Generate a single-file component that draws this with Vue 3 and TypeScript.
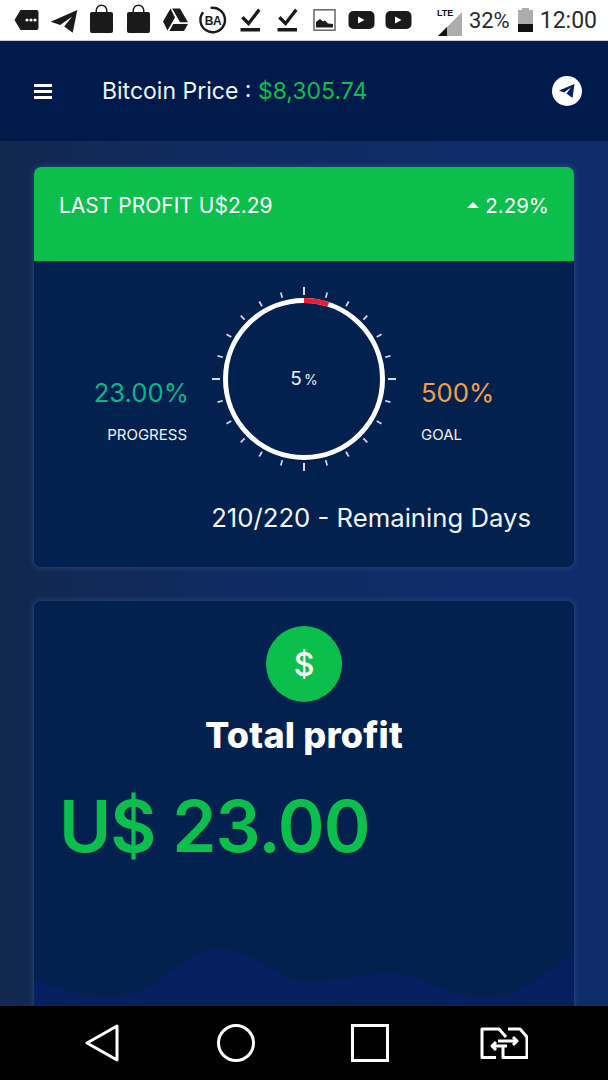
<template>
  <div class="screen">
    <div class="status">
      <svg v-for="(ic, i) in statusIcons" :key="i" class="slot" viewBox="0 0 37 40">
        <path :d="ic" fill="#1a1a1a" fill-rule="evenodd" />
        <circle v-if="i === 0" cx="19" cy="20" r="1.6" fill="#fff" />
        <circle v-if="i === 0" cx="23" cy="20" r="1.6" fill="#fff" />
        <circle v-if="i === 0" cx="27" cy="20" r="1.6" fill="#fff" />
        <template v-if="i === 5">
          <circle cx="19.700" cy="20" r="12.300" fill="none" stroke="#1a1a1a" stroke-width="2.400" stroke-dasharray="68 9" transform="rotate(-100 19.700 20)" />
          <text x="20" y="24.500" text-anchor="middle" class="ba">BA</text>
        </template>
        <polygon v-if="i >= 9" points="17,16.500 17,23.500 23.500,20" fill="#fff" />
        <template v-if="i === 8">
          <rect x="10" y="9.800" width="21" height="20.400" fill="none" stroke="#666" stroke-width="1.500" />
          <path d="M12 27.500V22l4-3 3 2.500 2-1 3 3 5 .5v3.500Z" fill="#1a1a1a" />
        </template>
      </svg>
      <div class="status-right">
        <svg class="signal" viewBox="0 0 26 32">
          <polygon points="24,8 24,32 0,32" fill="#adadad" />
          <polygon points="9,23 9,32 0,32" fill="#111" />
          <text x="-1" y="12" class="lte">LTE</text>
        </svg>
        <span class="pct">32%</span>
        <svg class="battery" viewBox="0 0 15 24">
          <path d="M4 0h7v2h4v22H0V2h4Z" fill="#adadad" />
          <rect y="16" width="15" height="8" fill="#111" />
        </svg>
        <span class="clock">12:00</span>
      </div>
    </div>

    <header class="topbar">
      <div class="burger"><i></i><i></i><i></i></div>
      <div class="price">Bitcoin Price : <span>$8,305.74</span></div>
      <div class="tg">
        <svg viewBox="0 0 30 30" width="30" height="30">
          <path d="M22.500 8 7 14.500l5 2 7-5-4.500 6 6 4.500Z" fill="#06225c" />
        </svg>
      </div>
    </header>

    <main class="content">
      <section class="card">
        <div class="card-head">
          <span>LAST PROFIT U$2.29</span>
          <span class="delta"><i class="caret"></i>2.29%</span>
        </div>
        <div class="gauge-row">
          <div class="stat stat-left">
            <div class="value teal">23.00%</div>
            <div class="label">PROGRESS</div>
          </div>
          <svg class="gauge" viewBox="0 0 190 190" width="190" height="190">
            <line
              v-for="t in ticks"
              :key="t.a"
              x1="95"
              :y1="t.y1"
              x2="95"
              :y2="t.y2"
              :stroke-width="t.w"
              :stroke="t.c"
              :transform="`rotate(${t.a} 95 95)`"
            />
            <circle cx="95" cy="95" r="78.500" fill="none" stroke="#fff" stroke-width="5" />
            <path :d="redArc" fill="none" stroke="#ee1c2e" stroke-width="5" />
            <text x="95" y="101" text-anchor="middle" class="gauge-text">5<tspan class="gauge-pct" dx="2">%</tspan></text>
          </svg>
          <div class="stat">
            <div class="value orange">500%</div>
            <div class="label">GOAL</div>
          </div>
        </div>
        <div class="days">210/220 - Remaining Days</div>
      </section>

      <section class="card profit">
        <div class="coin">$</div>
        <h2 class="profit-title">Total profit</h2>
        <div class="amount">U$ 23.00</div>
        <svg class="wave" viewBox="0 0 540 86" preserveAspectRatio="none">
          <path d="M0 35C30 43 50 53 76 53 125 53 145 4 185 4 225 4 240 37 276 37 305 37 325 28 354 28 390 28 415 53 447 53 485 53 510 30 540 6V86H0Z" fill="#051f5f" />
        </svg>
      </section>
    </main>

    <nav class="navbar">
      <div class="nav-slot">
        <svg width="34" height="38" viewBox="0 0 34 38"><path d="M32 2 2 19l30 17Z" fill="none" stroke="#fff" stroke-width="3" stroke-linejoin="round" /></svg>
      </div>
      <div class="nav-slot">
        <svg width="38" height="38" viewBox="0 0 38 38"><circle cx="19" cy="19" r="17.500" fill="none" stroke="#fff" stroke-width="3" /></svg>
      </div>
      <div class="nav-slot">
        <svg width="38" height="38" viewBox="0 0 38 38"><rect x="1.500" y="1.500" width="35" height="35" fill="none" stroke="#fff" stroke-width="3" /></svg>
      </div>
      <div class="nav-slot">
        <svg width="48" height="32" viewBox="-1 -1 48 32" fill="none" stroke="#fff" stroke-width="3" stroke-linejoin="round">
          <path d="M15 29.500H1V1h17l7 8" />
          <path d="M27 1h12l7 8v20.500H22V18" />
          <path d="M17 13h19M32 9l4 4-4 4" />
          <path d="M26 18H11M15 14l-4 4 4 4" />
        </svg>
      </div>
    </nav>
  </div>
</template>

<script setup lang="ts">
const bag = 'M8 14a2 2 0 0 1 2-2h3.500V10.500a6 6 0 0 1 12 0V12H29a2 2 0 0 1 2 2v17a2 2 0 0 1-2 2H10a2 2 0 0 1-2-2ZM15 12h9V10.500a4.500 4.500 0 0 0-9 0Z'
const check = 'M10.500 28h19.500v3.500H10.500ZM13.500 16l5 5 9.500-12.500 2.500 2.200L18.700 26l-7.500-7.500Z'
const yt = 'M12.500 11h16a5 5 0 0 1 5 5v8a5 5 0 0 1-5 5h-16a5 5 0 0 1-5-5v-8a5 5 0 0 1 5-5Z'

const statusIcons: string[] = [
  'M6.500 20 12.500 10h16a2 2 0 0 1 2 2v16a2 2 0 0 1-2 2h-16Z',
  'M32.300 10 5.700 21.700l9.500 3.300 12-8.500-8 10 8.500 6.200Z',
  bag,
  bag,
  'M14.500 8.500 7 21.500 11.500 30.500 19 17.500ZM16.200 8.500H24L32 22.200H24ZM13.300 31H28L32 24H17.300Z',
  '',
  check,
  check,
  '',
  yt,
  yt,
]

const ticks = Array.from({ length: 24 }, (_, i) => {
  const major = i % 6 === 0
  return {
    a: i * 15,
    y1: major ? 3 : 5.5,
    y2: 11,
    w: 1.7,
    c: major ? '#fff' : '#d5dae4',
  }
})

function polar(deg: number, r: number) {
  const rad = (deg * Math.PI) / 180
  return `${(95 + r * Math.sin(rad)).toFixed(2)} ${(95 - r * Math.cos(rad)).toFixed(2)}`
}
const redArc = `M${polar(0, 78.5)}A78.5 78.5 0 0 1 ${polar(18, 78.5)}`
</script>

<style>
html, body { margin: 0; background: #000; }
</style>

<style scoped>
.screen {
  width: 608px; height: 1080px;
  display: flex; flex-direction: column;
  overflow: hidden;
  font-family: Inter, "Liberation Sans", sans-serif;
  color: #fff;
}
.status {
  height: 40px; flex: none;
  display: flex; align-items: center;
  padding: 0 11px 0 8px;
  background: #fff;
  border-bottom: 1px solid #c8ccd4;
}
.slot { width: 37px; height: 40px; flex: none; }
.ba { font: 700 12px "Liberation Sans", sans-serif; fill: #1a1a1a; letter-spacing: -0.5px; }
.status-right { margin-left: auto; display: flex; align-items: center; color: #2b2b2b; font-family: Roboto, sans-serif; }
.signal { width: 26px; height: 32px; overflow: visible; margin-right: 5px; }
.lte { font: 700 9px "Liberation Sans", sans-serif; fill: #111; }
.pct { font-size: 22px; margin-right: 8px; }
.battery { width: 15px; height: 24px; margin-right: 7px; }
.clock { font-size: 23px; }

.topbar {
  height: 100px; flex: none;
  display: flex; align-items: center;
  padding: 0 26px 0 34px;
  background: #001a4c;
}
.burger { width: 18px; display: flex; flex-direction: column; gap: 3px; margin-right: 50px; }
.burger i { display: block; height: 3px; background: #fff; }
.price { flex: 1; font-size: 23px; font-weight: 400; color: #f1f3f7; }
.price span { color: #0cbf4d; }
.tg { width: 30px; height: 30px; border-radius: 50%; background: #fff; }

.content {
  flex: 1; min-height: 0;
  overflow: hidden;
  padding: 26px 34px 0;
  background: linear-gradient(90deg, #11284f 0, #0f2b62 40%, #0e2d6b 100%);
  display: flex; flex-direction: column; gap: 34px;
}
.card {
  flex: none;
  border-radius: 7px;
  background: #02214f;
  box-shadow: 0 0 6px rgba(150, 170, 210, 0.28);
  overflow: hidden;
  position: relative;
}
.card-head {
  height: 94px;
  display: flex; align-items: center; justify-content: space-between;
  padding: 0 25px 18px 25px;
  box-sizing: border-box;
  background: #0cbf4d;
  font-size: 21px;
}
.delta { display: flex; align-items: center; font-size: 20.500px; }
.caret {
  width: 0; height: 0; margin-right: 6px;
  border-left: 6px solid transparent; border-right: 6px solid transparent;
  border-bottom: 6px solid #fff;
}
.gauge-row {
  display: grid; grid-template-columns: 175px 190px 175px;
  padding-top: 23px;
}
.stat { padding: 93px 0 0 22px; }
.stat-left { padding: 93px 20px 0 0; text-align: right; }
.value { font-size: 25.700px; line-height: 32px; }
.teal { color: #0bb58a; }
.orange { color: #f0a04b; }
.label { margin-top: 16px; font-size: 15px; line-height: 20px; color: #eef1f6; }
.stat-left .label { padding-right: 2px; }
.gauge-text { font-size: 19px; fill: #eef1f6; }
.gauge-pct { font-size: 14px; }
.days {
  margin-top: 28px; padding: 0 43px 33px 0;
  text-align: right;
  font-size: 25.700px; line-height: 32px;
  color: #f1f3f7;
}

.profit { height: 430px; padding: 25px 27px 0; box-sizing: border-box; }
.coin {
  width: 76px; height: 76px; margin: 0 auto;
  border-radius: 50%;
  background: #0cbf4d;
  display: flex; align-items: center; justify-content: center;
  font-size: 32px; font-weight: 500;
}
.profit-title {
  margin: 10px 0 0;
  text-align: center;
  font-size: 36px; line-height: 46px; font-weight: 800;
  letter-spacing: 0.2px;
}
.amount {
  margin-top: 23px;
  font-size: 71px; line-height: 90px; font-weight: 600;
  color: #0cbf4d;
  letter-spacing: -1px;
  margin-left: -2px;
  position: relative; z-index: 1;
}
.wave { position: absolute; left: 0; right: 0; bottom: 0; width: 100%; height: 86px; }

.navbar {
  height: 74px; flex: none;
  background: #000;
  display: flex; align-items: center;
  padding-left: 35px;
}
.nav-slot { width: 134px; display: flex; justify-content: center; }
</style>
